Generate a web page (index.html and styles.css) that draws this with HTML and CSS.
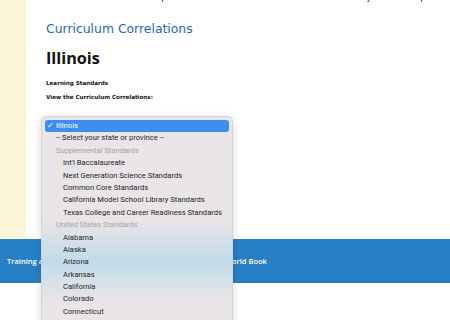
FILE: index.html
```html
<!DOCTYPE html>
<html>
<head>
<title>Curriculum Correlations</title>
<link rel="stylesheet" href="styles.css">
</head>
<body>
<div class="wrap">
   <div class="side"></div>
   <div class="main">
      <p class="intro">World Book correlates its products to the curriculum standards for every state and province in one easy place.</p>
      <h2>Curriculum Correlations</h2>
      <h1>Illinois</h1>
      <p class="label">Learning Standards</p>
      <p class="label">View the Curriculum Correlations:</p>
   </div>
</div>
<div class="footer">
   <p>Training and resources for all librarians and educators from World Book</p>
</div>

<ul class="menu">
   <li class="sel"><span class="check">&#10003;</span>Illinois</li>
   <li>-- Select your state or province --</li>
   <li class="group">Supplemental Standards</li>
   <li class="sub">Int'l Baccalaureate</li>
   <li class="sub">Next Generation Science Standards</li>
   <li class="sub">Common Core Standards</li>
   <li class="sub">California Model School Library Standards</li>
   <li class="sub">Texas College and Career Readiness Standards</li>
   <li class="group">United States Standards</li>
   <li class="sub">Alabama</li>
   <li class="sub">Alaska</li>
   <li class="sub">Arizona</li>
   <li class="sub">Arkansas</li>
   <li class="sub">California</li>
   <li class="sub">Colorado</li>
   <li class="sub">Connecticut</li>
   <li class="sub">Delaware</li>
</ul>
</body>
</html>
```

FILE: styles.css
```css
body {
   margin: 0;
   padding: 0;
   font-family: "DejaVu Sans", Verdana, sans-serif;
   background-color: #ffffff;
   overflow: hidden;
}
.wrap {
   display: flex;
   height: 239px;
}
.side {
   flex: 0 0 26px;
   background-color: #fcf5d8;
}
.main {
   flex: 1;
   min-width: 0;
   padding-left: 20px;
}
.intro {
   margin: -9px 0 0 0;
   font-size: 9px;
   line-height: 12px;
   color: #222222;
   white-space: nowrap;
   overflow: hidden;
}
h2 {
   margin: 16px 0 0 0;
   font-size: 12.4px;
   font-weight: normal;
   color: #1c6bb3;
   line-height: 20px;
}
h1 {
   margin: 9px 0 0 0;
   font-family: "Open Sans", sans-serif;
   font-size: 16.2px;
   line-height: 20px;
   color: #111111;
}
.label {
   margin: 0;
   font-size: 5.6px;
   line-height: 8px;
   font-weight: bold;
   color: #111111;
}
h1 + .label {
   margin-top: 11px;
}
.label + .label {
   margin-top: 6px;
}
.footer {
   background-color: #2780c6;
   height: 44px;
   display: flex;
   align-items: center;
   padding-left: 7px;
}
.footer p {
   margin: 0;
   font-family: "Open Sans", sans-serif;
   color: #ffffff;
   font-size: 7.5px;
   font-weight: 600;
   white-space: nowrap;
}
.menu {
   position: absolute;
   left: 41px;
   top: 116px;
   width: 184px;
   height: 220px;
   margin: 0;
   padding: 3px 3px;
   list-style: none;
   border-radius: 5px;
   border: 1px solid #d6d2d6;
   box-shadow: 0 2px 8px rgba(0, 0, 0, 0.15);
   background: linear-gradient(#e9e5e9 0px, #e8e4e8 105px, #cfdfe9 130px, #c0dbea 145px, #d2e0e9 160px, #e9e5e9 185px);
   font-family: Roboto, "Open Sans", sans-serif;
   font-size: 7.6px;
   color: #262626;
   overflow: hidden;
}
.menu li {
   height: 12.4px;
   line-height: 12.4px;
   padding-left: 11px;
   white-space: nowrap;
}
.menu .sel {
   background-color: #3d8ef3;
   color: #ffffff;
   border-radius: 3px;
   padding-left: 2px;
}
.menu .check {
   display: inline-block;
   width: 9px;
}
.menu .group {
   color: #a6a3a7;
}
.menu .sub {
   padding-left: 18px;
}
```
